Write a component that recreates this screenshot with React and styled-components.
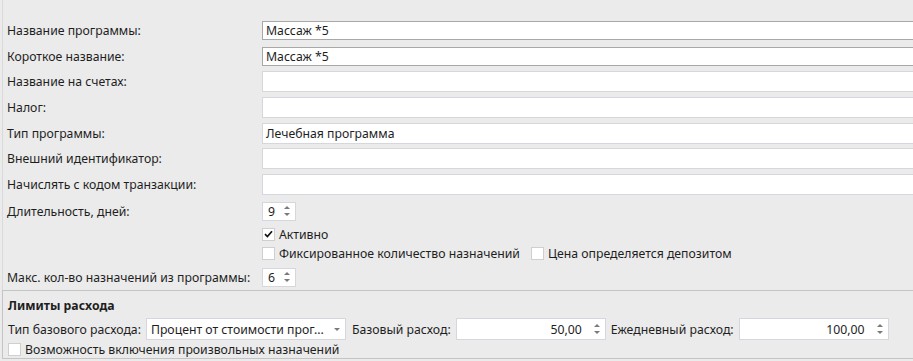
import React from 'react';
import styled, { createGlobalStyle } from 'styled-components';

const Global = createGlobalStyle`
  html, body {
    margin: 0;
    padding: 0;
    background: #ebebeb;
    overflow: hidden;
  }
  body {
    font-family: "Noto Sans", "Open Sans", sans-serif;
    font-size: 12.25px;
    color: #1e1e1e;
  }
`;

const Page = styled.div`
  width: 913px;
  height: 361px;
  overflow: hidden;
  background: #ebebeb;
`;

const Panel = styled.div`
  margin-left: 2px;
  padding-top: 18px;
  border-left: 1px solid #dadada;
`;

const Field = styled.div`
  display: flex;
  align-items: center;
  height: ${p => p.h}px;
`;

const Label = styled.div`
  width: 255px;
  padding-left: 4px;
  flex-shrink: 0;
  white-space: nowrap;
`;

const TextBox = styled.div`
  flex: 1;
  margin-right: -6px;
  height: ${p => (p.strong ? 17 : 19)}px;
  line-height: ${p => (p.strong ? 17 : 19)}px;
  padding-left: 3px;
  background: #fff;
  border: 1px solid ${p => (p.strong ? '#a8a8a8' : '#d6d6de')};
  white-space: nowrap;
`;

const Spin = styled.div`
  display: flex;
  align-items: center;
  justify-content: ${p => (p.right ? 'flex-end' : 'space-between')};
  width: ${p => p.w}px;
  height: ${p => p.hgt || 19}px;
  background: #fff;
  border: 1px solid #d6d6de;
  padding: 0 4px 0 ${p => (p.right ? 4 : 5)}px;
  box-sizing: border-box;
  gap: ${p => (p.right ? 12 : 0)}px;
`;

const Arrows = styled.div`
  display: flex;
  flex-direction: column;
  justify-content: center;
  gap: 4px;
  width: 7px;
`;

const Tri = styled.div`
  width: 0;
  height: 0;
  border-left: 3px solid transparent;
  border-right: 3px solid transparent;
  ${p => (p.down ? 'border-top: 3px solid #7a7a7a;' : 'border-bottom: 3px solid #7a7a7a;')}
`;

const CheckRow = styled.label`
  display: flex;
  align-items: center;
  gap: 4px;
  margin-right: ${p => p.mr || 0}px;
  white-space: nowrap;
`;

const Box = styled.span`
  width: 11px;
  height: 11px;
  background: #fff;
  border: 1px solid #cfcfcf;
  display: flex;
  align-items: center;
  justify-content: center;
  flex-shrink: 0;
`;

const Checks = styled.div`
  display: flex;
  align-items: center;
`;

const Group = styled.fieldset`
  margin: 0 0 0 2px;
  padding: 3px 0 0 5px;
  border: none;
  border-top: 1px solid #c4c4c4;
  border-left: 1px solid #c4c4c4;
  border-bottom: 1px solid #c4c4c4;
  height: 64px;
`;

const GroupTitle = styled.div`
  font-weight: 700;
  height: 23px;
  line-height: 23px;
`;

const LimitRow = styled.div`
  display: flex;
  align-items: center;
  height: 24px;
`;

const InlineLabel = styled.span`
  margin: 0 5px 0 ${p => p.ml || 0}px;
  white-space: nowrap;
`;

const Combo = styled.div`
  display: flex;
  align-items: center;
  justify-content: space-between;
  width: 200px;
  height: 22px;
  box-sizing: border-box;
  background: #fff;
  border: 1px solid #d6d6de;
  padding: 0 5px 0 4px;
  white-space: nowrap;
`;

const Check = () => (
  <svg width="9" height="8" viewBox="0 0 9 8">
    <path d="M1 4.2 L3.4 6.5 L8 1.3" stroke="#111" strokeWidth="1.7" fill="none" />
  </svg>
);

const SpinArrows = () => (
  <Arrows>
    <Tri />
    <Tri down />
  </Arrows>
);

const fields = [
  ['Название программы:', 'Массаж *5', true],
  ['Короткое название:', 'Массаж *5', true],
  ['Название на счетах:', '', false],
  ['Налог:', '', false],
  ['Тип программы:', 'Лечебная программа', false],
  ['Внешний идентификатор:', '', false],
  ['Начислять с кодом транзакции:', '', false],
];

export default function App() {
  return (
    <Page>
      <Global />
      <Panel>
        {fields.map(([label, value, strong]) => (
          <Field key={label} h={25.6}>
            <Label>{label}</Label>
            <TextBox strong={strong}>{value}</TextBox>
          </Field>
        ))}
        <Field h={28}>
          <Label>Длительность, дней:</Label>
          <Spin w={34}>
            <span>9</span>
            <SpinArrows />
          </Spin>
        </Field>
        <Field h={18}>
          <Label />
          <CheckRow>
            <Box><Check /></Box>
            Активно
          </CheckRow>
        </Field>
        <Field h={21}>
          <Label />
          <Checks>
            <CheckRow mr={11}>
              <Box />
              Фиксированное количество назначений
            </CheckRow>
            <CheckRow>
              <Box />
              Цена определяется депозитом
            </CheckRow>
          </Checks>
        </Field>
        <Field h={26}>
          <Label>Макс. кол-во назначений из программы:</Label>
          <Spin w={34}>
            <span>6</span>
            <SpinArrows />
          </Spin>
        </Field>
      </Panel>
      <Group>
        <GroupTitle>Лимиты расхода</GroupTitle>
        <LimitRow>
          <InlineLabel>Тип базового расхода:</InlineLabel>
          <Combo>
            <span>Процент от стоимости прог...</span>
            <Tri down />
          </Combo>
          <InlineLabel ml={6}>Базовый расход:</InlineLabel>
          <Spin right w={150} hgt={22}>
            <span>50,00</span>
            <SpinArrows />
          </Spin>
          <InlineLabel ml={5}>Ежедневный расход:</InlineLabel>
          <Spin right w={150} hgt={22}>
            <span>100,00</span>
            <SpinArrows />
          </Spin>
        </LimitRow>
        <CheckRow>
          <Box />
          Возможность включения произвольных назначений
        </CheckRow>
      </Group>
    </Page>
  );
}
